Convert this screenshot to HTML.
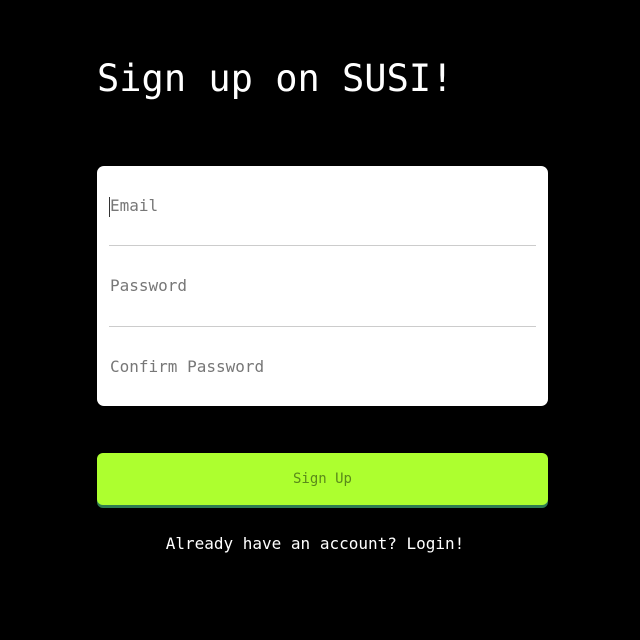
<!DOCTYPE html>
<html><head><style>
body{margin:0;width:640px;height:640px;background:#000;font-family:"DejaVu Sans Mono","Liberation Mono",monospace;position:relative;overflow:hidden}
.t{position:absolute;left:97px;top:54px;font-size:37px;color:#fff;line-height:50px;white-space:nowrap}
.card{position:absolute;left:97px;top:166px;width:451px;height:240px;background:#fff;border-radius:7px}
.f{position:absolute;left:13px;font-size:16px;color:#777;line-height:20px}
.ln{position:absolute;left:12px;width:427px;height:1px;background:#ccc}
.cur{position:absolute;left:12px;top:31px;width:1px;height:20px;background:#333}
.btn{position:absolute;left:97px;top:453px;width:451px;height:52px;background:#adff2f;border-radius:6px;box-shadow:0 3px 0 #2e7d52;text-align:center;line-height:52px;font-size:14px;color:#5a8a1a}
.b{position:absolute;left:-5px;width:640px;top:533px;text-align:center;color:#fff;font-size:16px;line-height:22px}
</style></head><body>
<div class="t">Sign up on SUSI!</div>
<div class="card">
<div class="cur"></div>
<div class="f" style="top:30px">Email</div>
<div class="ln" style="top:79px"></div>
<div class="f" style="top:110px">Password</div>
<div class="ln" style="top:160px"></div>
<div class="f" style="top:191px">Confirm Password</div>
</div>
<div class="btn">Sign Up</div>
<div class="b">Already have an account? Login!</div>
</body></html>
